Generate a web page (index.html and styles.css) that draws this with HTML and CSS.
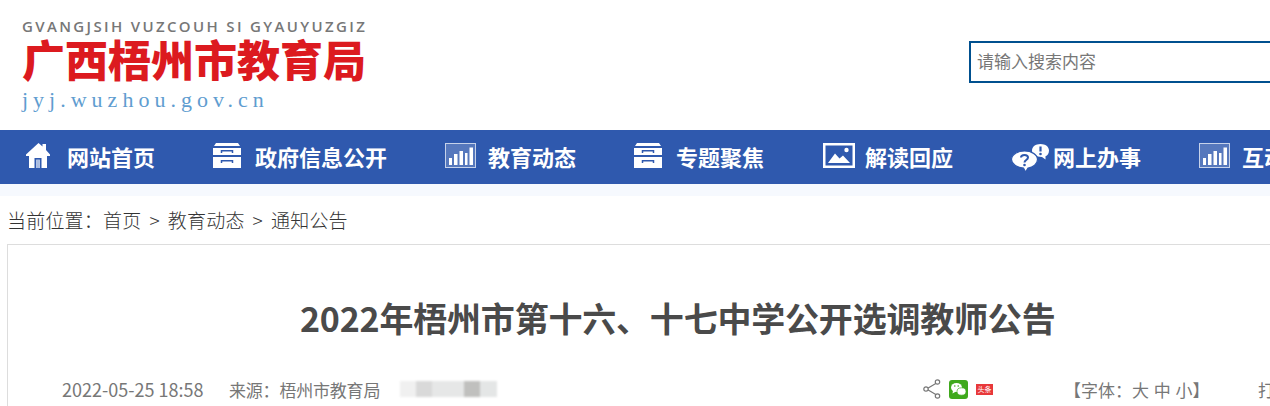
FILE: index.html
```html
<!DOCTYPE html>
<html lang="zh-CN">
<head>
  <meta charset="UTF-8">
  <meta name="viewport" content="width=device-width, initial-scale=1.0">
  <title>2022年梧州市第十六、十七中学公开选调教师公告</title>
  <link rel="stylesheet" href="styles.css">
</head>
<body>
  <header class="top">
    <div class="logo">
      <div class="logo-zhuang">GVANGJSIH VUZCOUH SI GYAUYUZGIZ</div>
      <div class="logo-name">广西梧州市教育局</div>
      <div class="logo-url">jyj.wuzhou.gov.cn</div>
    </div>
    <div class="search">
      <input class="search-input" type="text" placeholder="请输入搜索内容">
    </div>
  </header>

  <nav class="nav">
    <a class="nav-item">
      <svg class="ico ico-home" width="24" height="25" viewBox="0 0 24 25"><path fill="#fff" d="M12.500 0 L16.500 3.500 V1 H20 V7 L24 11.500 V13 H21 V25 H3 V13 H0 V11.500 Z"/><path fill="#2f59ae" d="M8.500 15 H15.500 V25 H13.800 V16.800 H10.200 V25 H8.500 Z"/><path fill="#a9bce0" d="M10.200 16.800 H13.800 V25 H10.200 Z"/></svg>
      网站首页
    </a>
    <a class="nav-item">
      <svg class="ico ico-box" width="28" height="25" viewBox="0 0 28 25"><path fill="#fff" d="M3 0 H25 L27 3 H1 Z M0 5 H28 V12 H0 Z M0 14 H28 V25 H0 Z"/><path fill="none" stroke="#2f59ae" stroke-width="1.500" d="M8.500 10 V7.800 H19.500 V10 M8.500 20 V17.800 H19.500 V20"/></svg>
      政府信息公开
    </a>
    <a class="nav-item">
      <svg class="ico ico-bars" width="31" height="25" viewBox="0 0 31 25"><rect x=".5" y=".5" width="30" height="24" fill="#ffffff30" stroke="#c6d2ea"/><path fill="#fff" d="M4 15 H7 V22 H4 Z M9 11 H12.500 V22 H9 Z M14.500 8 H18 V22 H14.500 Z M20 10 H22.500 V22 H20 Z M24.500 4.500 H28 V22 H24.500 Z"/></svg>
      教育动态
    </a>
    <a class="nav-item">
      <svg class="ico ico-box2" width="28" height="25" viewBox="0 0 28 25"><path fill="#fff" d="M3 0 H25 L27 3 H1 Z M0 5 H28 V12 H0 Z M0 14 H28 V25 H0 Z"/><path fill="none" stroke="#2f59ae" stroke-width="1.500" d="M8.500 10 V7.800 H19.500 V10 M8.500 20 V17.800 H19.500 V20"/></svg>
      专题聚焦
    </a>
    <a class="nav-item">
      <svg class="ico ico-pic" width="32" height="25" viewBox="0 0 32 25"><rect x="1.250" y="1.250" width="29.500" height="22.500" fill="none" stroke="#fff" stroke-width="2.500"/><path fill="#fff" d="M5 20 L12 10.500 L16.500 15.500 L20 12.500 L27 20 Z"/><circle cx="23.500" cy="7" r="2.200" fill="#fff"/></svg>
      解读回应
    </a>
    <a class="nav-item">
      <svg class="ico ico-talk" width="38" height="28" viewBox="0 0 38 28"><path fill="#fff" d="M29.500 0 C34.500 0 38 2.800 38 6.500 C38 9.500 36.500 11.500 34.500 12.300 L34.500 15.500 L31 13 C25 13 21 10 21 6.500 C21 2.800 24.500 0 29.500 0 Z"/><path fill="#fff" stroke="#2f59ae" stroke-width="1.200" d="M13.500 7 C20.500 7 26.500 10.500 26.500 15.500 C26.500 20 22 23.500 17 24 L14.500 28 L12.500 24 C6 23.500 .5 20 .5 15.500 C.5 10.500 6.500 7 13.500 7 Z"/><path fill="none" stroke="#2f59ae" stroke-width="2" d="M10 13.500 C10 10 17 10 17 13.500 C17 16 13.500 16 13.500 18.500"/><circle cx="13.500" cy="21" r="1.300" fill="#2f59ae"/><path fill="none" stroke="#2f59ae" stroke-width="2.200" d="M29.500 2.500 V7.500"/><circle cx="29.500" cy="10" r="1.300" fill="#2f59ae"/></svg>
      网上办事
    </a>
    <a class="nav-item">
      <svg class="ico ico-bars" width="31" height="25" viewBox="0 0 31 25"><rect x=".5" y=".5" width="30" height="24" fill="#ffffff30" stroke="#c6d2ea"/><path fill="#fff" d="M4 15 H7 V22 H4 Z M9 11 H12.500 V22 H9 Z M14.500 8 H18 V22 H14.500 Z M20 10 H22.500 V22 H20 Z M24.500 4.500 H28 V22 H24.500 Z"/></svg>
      互动交流
    </a>
  </nav>

  <div class="crumb">
    当前位置：<a>首页</a><span class="crumb-sep">&gt;</span><a>教育动态</a><span class="crumb-sep">&gt;</span><a>通知公告</a>
  </div>

  <main class="card">
    <h1 class="title">2022年梧州市第十六、十七中学公开选调教师公告</h1>
    <div class="meta">
      <span class="meta-date">2022-05-25 18:58</span>
      <span class="meta-source">来源：梧州市教育局</span>
      <div class="smudge">
        <i class="s1"></i><i class="s2"></i><i class="s3"></i><i class="s4"></i><i class="s5"></i>
      </div>
      <div class="share">
        <svg class="share-ico" width="18" height="20" viewBox="0 0 18 20"><path fill="none" stroke="#777" stroke-width="1.200" d="M14.500 3.500 L3.500 10 L14.500 16.500"/><circle cx="14.500" cy="3" r="2.200" fill="#fff" stroke="#777" stroke-width="1.200"/><circle cx="3" cy="10" r="2.200" fill="#fff" stroke="#777" stroke-width="1.200"/><circle cx="14.500" cy="17" r="2.200" fill="#fff" stroke="#777" stroke-width="1.200"/></svg>
        <svg class="wx-ico" width="19" height="19" viewBox="0 0 19 19"><rect width="19" height="19" rx="3" fill="#3fa91c"/><ellipse cx="7.500" cy="7.500" rx="5.500" ry="4.500" fill="#fff"/><path fill="#fff" d="M4 10.500 L3.500 13.500 L7 11.500 Z"/><ellipse cx="12.500" cy="11.500" rx="4.500" ry="3.700" fill="#fff" stroke="#3fa91c" stroke-width=".7"/><circle cx="5.800" cy="6" r=".8" fill="#3fa91c"/><circle cx="9.200" cy="6" r=".8" fill="#3fa91c"/></svg>
        <span class="tt-ico">头条</span>
      </div>
      <div class="fontsize">【字体：大 中 小】</div>
      <div class="print">打印</div>
    </div>
  </main>
</body>
</html>
```

FILE: styles.css
```css
* {
  box-sizing: border-box;
}

html, body {
  height: 100%;
  overflow: hidden;
}

body {
  margin: 0;
  width: 1270px;
  background: #fff;
  color: #333;
  font-family: "Noto Sans CJK SC", "Noto Sans", sans-serif;
}

/* header */
.top {
  display: flex;
  height: 130px;
  padding: 17px 0 0 22px;
}

.logo {
  width: 947px;
  flex: none;
}

.logo-zhuang {
  font-family: "Open Sans", "Liberation Sans", sans-serif;
  font-size: 15px;
  line-height: 18px;
  font-weight: 600;
  letter-spacing: 2.35px;
  color: #777;
  white-space: nowrap;
}

.logo-name {
  font-size: 43px;
  line-height: 47px;
  font-weight: 900;
  color: #dc1a1f;
  white-space: nowrap;
}

.logo-url {
  margin-top: 5px;
  font-family: "Liberation Serif", serif;
  font-size: 22px;
  line-height: 26px;
  letter-spacing: 5px;
  color: #5f9dd0;
}

.search {
  margin-top: 24px;
  width: 320px;
  flex: none;
}

.search-input {
  display: block;
  width: 100%;
  height: 42px;
  padding: 0 6px 3px;
  border: 2px solid #00508f;
  font-family: inherit;
  font-size: 17px;
  outline: none;
}

.search-input::placeholder {
  color: #777;
  opacity: 1;
}

/* nav */
.nav {
  display: flex;
  gap: 58px;
  height: 54px;
  padding: 0 0 3px 26px;
  background: #2f59ae;
  white-space: nowrap;
  overflow: hidden;
}

.nav-item {
  display: flex;
  align-items: center;
  flex: none;
  color: #fff;
  font-size: 22px;
  font-weight: 700;
}

.ico {
  flex: none;
}

.ico-home { margin-right: 17px; }
.ico-box { margin-right: 14px; }
.ico-box2 { margin-right: 14px; }
.ico-bars { margin-right: 12px; }
.ico-pic { margin: 0 10px 0 1px; }
.ico-talk { margin: 5px 4px 0 0; }

/* breadcrumb */
.crumb {
  height: 60px;
  padding: 11px 0 0 7px;
  border-top: 12px solid #f6f9fe;
  font-size: 19px;
  line-height: 26px;
  font-weight: 300;
  letter-spacing: .2px;
  color: #333;
}

.crumb-sep {
  margin: 0 8px;
}

/* article */
.card {
  margin-left: 7px;
  width: 1300px;
  height: 162px;
  border: 1px solid #ddd;
  border-bottom: none;
  background: #fff;
}

.title {
  margin: 48px 0 0;
  padding-left: 292px;
  font-size: 34px;
  line-height: 50px;
  font-weight: 700;
  letter-spacing: -.2px;
  color: #4a4a4a;
  white-space: nowrap;
}

.meta {
  display: flex;
  align-items: center;
  margin-top: 33px;
  padding-left: 54px;
  height: 26px;
  font-size: 17px;
  color: #777;
  white-space: nowrap;
}

.meta-date {
  width: 167px;
  flex: none;
  font-size: 18px;
}

.meta-source {
  width: 171px;
  flex: none;
  letter-spacing: -.2px;
}

.smudge {
  display: flex;
  width: 97px;
  height: 16px;
  flex: none;
  filter: blur(1px);
}

.smudge i {
  display: block;
  height: 100%;
}

.s1 { width: 16px; background: #f0f0f0; }
.s2 { width: 16px; background: #d9d9d9; }
.s3 { width: 32px; background: #e6e7e7; }
.s4 { width: 16px; background: #c0c0be; }
.s5 { width: 17px; background: #e4e6e6; }

.share {
  display: flex;
  align-items: center;
  flex: none;
  width: 141px;
  margin-left: 426px;
}

.wx-ico {
  margin-left: 8px;
}

.tt-ico {
  display: block;
  width: 17px;
  height: 11px;
  margin-left: 8px;
  background: #e8383a;
  color: #fff;
  font-size: 7px;
  line-height: 11px;
  text-align: center;
  overflow: hidden;
}

.fontsize {
  flex: none;
  width: 194px;
  word-spacing: 1px;
}

.print {
  flex: none;
}
```
